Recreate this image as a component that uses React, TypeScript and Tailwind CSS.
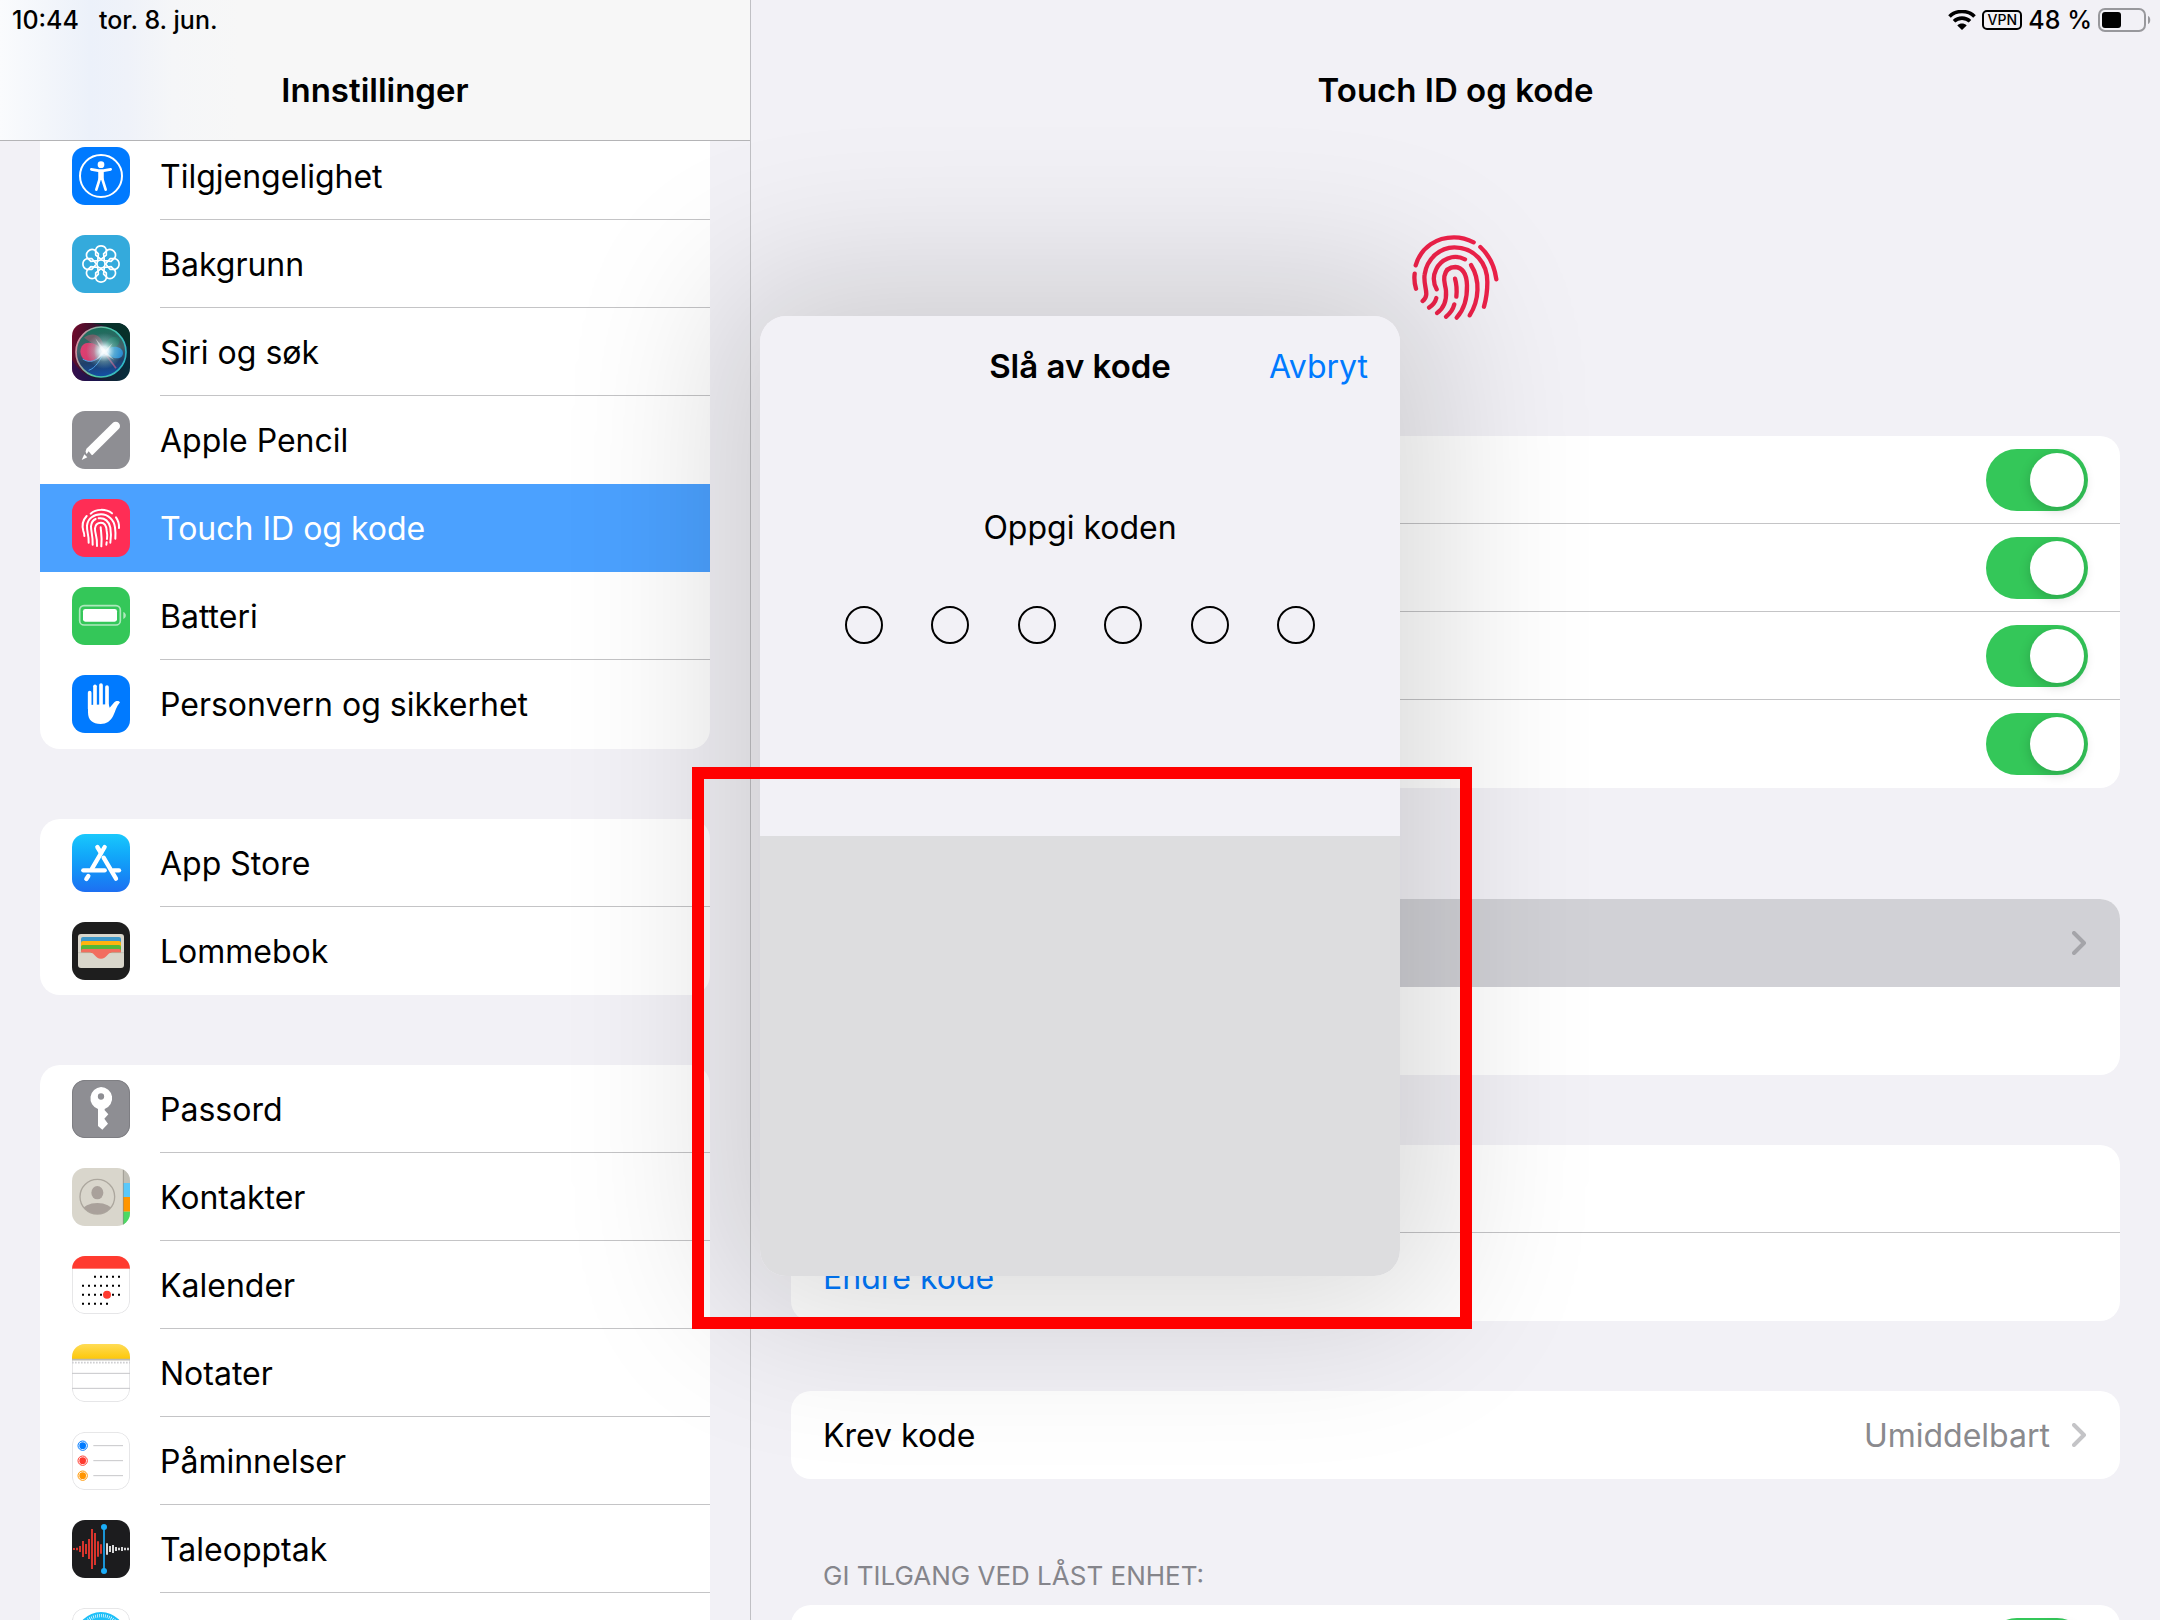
import { useId, type ReactNode } from 'react'
import clsx from 'clsx'

const IconTile = ({ className, children }: { className?: string; children: ReactNode }) => (
  <svg
    viewBox="0 0 174 174"
    className={clsx('size-[58px] shrink-0 rounded-[13px]', className)}
    fill="none"
    aria-hidden="true"
  >
    {children}
  </svg>
)

const TileBorder = () => (
  <rect x="1" y="1" width="172" height="172" rx="38" stroke="#e2e2e4" strokeWidth="3" />
)

const AccessibilityIcon = () => (
  <IconTile className="bg-[#007aff]">
    <circle cx="87" cy="87" r="63" stroke="#fff" strokeWidth="6" />
    <circle cx="87" cy="53" r="10" fill="#fff" />
    <path
      d="M58 67 L79 71 H95 L116 67 M84 72 V93 L73 128 M90 72 V93 L101 128"
      stroke="#fff"
      strokeWidth="8"
      strokeLinecap="round"
      strokeLinejoin="round"
    />
    <path d="M79 70 H95 V98 H79 Z" fill="#fff" />
  </IconTile>
)

const WallpaperIcon = () => (
  <IconTile className="bg-[#34aadc]">
    <g stroke="#fff" strokeWidth="5">
      <circle cx="87" cy="87" r="12" />
      {[0, 45, 90, 135, 180, 225, 270, 315].map((angle) => (
        <path
          key={angle}
          d="M87 73 L71 60 V44 A17 17 0 0 1 103 44 V60 Z"
          strokeLinejoin="round"
          transform={`rotate(${angle} 87 87)`}
        />
      ))}
    </g>
  </IconTile>
)

const SiriIcon = () => {
  const id = useId()
  return (
    <IconTile>
      <defs>
        <linearGradient id={`${id}bg`} x1="0" y1="0.3" x2="1" y2="0.5">
          <stop offset="0" stopColor="#6d0a2b" />
          <stop offset="0.5" stopColor="#1d1830" />
          <stop offset="1" stopColor="#082c3c" />
        </linearGradient>
        <linearGradient id={`${id}orb`} x1="0.4" y1="0" x2="0.5" y2="1">
          <stop offset="0" stopColor="#15705a" />
          <stop offset="0.45" stopColor="#45606a" />
          <stop offset="0.7" stopColor="#1f3f6a" />
          <stop offset="1" stopColor="#1250a8" />
        </linearGradient>
        <linearGradient id={`${id}ring`} x1="0" y1="0.3" x2="1" y2="0.6">
          <stop offset="0" stopColor="#dd8ba0" />
          <stop offset="0.5" stopColor="#4fc9a4" />
          <stop offset="1" stopColor="#2fb7c8" />
        </linearGradient>
        <linearGradient id={`${id}pink`} x1="0" y1="0" x2="1" y2="0">
          <stop offset="0" stopColor="#f03a72" />
          <stop offset="0.6" stopColor="#e0406f" />
          <stop offset="1" stopColor="#ffd0dc" stopOpacity="0.3" />
        </linearGradient>
        <radialGradient id={`${id}glow`}>
          <stop offset="0" stopColor="#fff" />
          <stop offset="0.25" stopColor="#eafaff" stopOpacity="0.9" />
          <stop offset="0.6" stopColor="#a5e0dc" stopOpacity="0.35" />
          <stop offset="1" stopColor="#8fe0e8" stopOpacity="0" />
        </radialGradient>
      </defs>
      <rect width="174" height="174" fill={`url(#${id}bg)`} />
      <path d="M0 174 V110 C30 160 70 172 120 174 Z" fill="#1c1160" opacity="0.6" />
      <path d="M60 0 H174 V80 C150 20 110 8 60 0 Z" fill="#07302a" />
      <circle cx="87" cy="87" r="75" fill={`url(#${id}orb)`} stroke={`url(#${id}ring)`} strokeWidth="5" />
      <path d="M36 44 C60 26 96 30 96 86 Z" fill="#b9566f" opacity="0.5" />
      <path d="M96 86 C96 50 122 34 138 44 C150 54 140 76 96 86 Z" fill="#1d8f70" opacity="0.5" />
      <path d="M25 86 C26 52 66 48 96 86 C82 120 30 130 25 86 Z" fill={`url(#${id}pink)`} fillOpacity="0.9" />
      <path d="M96 86 C118 64 150 68 153 90 C152 112 122 112 96 86 Z" fill="#2a9be8" fillOpacity="0.8" />
      <path d="M32 108 C60 126 80 106 96 86 C86 110 70 136 50 142" stroke="#4a9fe8" strokeWidth="3" />
      <path d="M98 90 L132 136" stroke="#e0608a" strokeWidth="5" opacity="0.6" />
      <circle cx="96" cy="84" r="54" fill={`url(#${id}glow)`} />
      <path d="M70 46 L100 82 L122 60 L104 88 L126 110 L96 92 L72 112 L90 86 Z" fill="#fff" opacity="0.5" />
    </IconTile>
  )
}

const PencilIcon = () => (
  <IconTile className="bg-[#8e8e93]">
    <path d="M54 121 L131 45" stroke="#fff" strokeWidth="26" strokeLinecap="round" />
    <path d="M36 140 L50 121 L62 136 Z" fill="#8e8e93" />
    <path d="M29 147 L37 130 L46 139 Z" fill="#fff" />
  </IconTile>
)

const TouchIdIcon = () => (
  <IconTile className="bg-[#ff2d55]">
    <g stroke="#fff" strokeWidth="6" strokeLinecap="round">
      <path d="M56 44 C72 29 102 29 120 43" />
      <path d="M44 51 C31 65 30 82 34 96 C36 101 37 106 37 111" />
      <path d="M132 55 C139 65 142 74 141 87" />
      <path d="M50 131 C51 106 44 102 45 80 C47 58 66 46 87 46 C108 46 126 62 129 85 C131 100 131 110 130 119" />
      <path d="M62 137 C63 110 57 100 57 82 C58 71 62 64 71 60" />
      <path d="M80 58 C98 55 112 68 115 86 C118 103 117 118 115 131" />
      <path d="M75 141 C77 112 68 104 69 88 C70 76 78 71 87 71 C97 71 103 80 104 95 C106 104 106 112 105 120" />
      <path d="M88 142 C91 115 87 100 86 85" />
      <path d="M104 130 L103 137" />
    </g>
  </IconTile>
)

const BatteryIcon = () => (
  <IconTile className="bg-[#34c759]">
    <rect x="23" y="56" width="122" height="58" rx="13" stroke="#fff" strokeOpacity="0.6" strokeWidth="5" />
    <rect x="33" y="66" width="102" height="38" rx="7" fill="#fff" />
    <path d="M154 75 C164 79 164 91 154 96 Z" fill="#fff" fillOpacity="0.6" />
  </IconTile>
)

const HandIcon = () => (
  <IconTile className="bg-[#007aff]">
    <g stroke="#fff" strokeWidth="11" strokeLinecap="round">
      <path d="M53 53 V100" />
      <path d="M69 34 V100" />
      <path d="M87 30 V100" />
      <path d="M105 36 V104" />
    </g>
    <path
      d="M48 90 V112 C48 136 62 147 86 147 C104 147 115 139 123 124 C130 110 133 94 144 82 C140 76 132 77 127 82 L113 98 L110 88 Z"
      fill="#fff"
    />
  </IconTile>
)

const AppStoreIcon = () => (
  <IconTile className="bg-linear-to-b from-[#1ac8fc] to-[#1d6ff2]">
    <g stroke="#fff" strokeWidth="13" strokeLinecap="round">
      <path d="M98 39 L60 104" />
      <path d="M76 39 L87 57" />
      <path d="M95 71 L132 134" />
      <path d="M34 109 H98" />
      <path d="M124 109 H141" />
      <path d="M49 126 L43 135" />
    </g>
  </IconTile>
)

const WalletIcon = () => (
  <IconTile className="bg-[#1e1e1e]">
    <rect x="18" y="36" width="138" height="102" rx="9" fill="#d9d6cb" />
    <rect x="27" y="45" width="120" height="30" rx="6" fill="#3f98c9" />
    <rect x="27" y="57" width="120" height="30" rx="6" fill="#ffb30f" />
    <rect x="27" y="69" width="120" height="23" rx="6" fill="#53b83a" />
    <path
      d="M27 92 V87 Q27 81 33 81 H141 Q147 81 147 87 V92 H118 C105 92 105 110 87 110 C69 110 69 92 56 92 Z"
      fill="#f26d5f"
    />
    <path d="M18 92 H56 M118 92 H156" stroke="#b9b6ac" strokeWidth="2" />
  </IconTile>
)

const KeyIcon = () => (
  <IconTile className="bg-[#8e8e93]">
    <rect x="1" y="1" width="172" height="172" rx="38" stroke="#7c7c80" strokeWidth="3" />
    <path
      fillRule="evenodd"
      d="M87 21 A34 34 0 0 1 98 87 L98 91 L109 103 L97 116 L108 131 L91 149 L78 138 V87 A34 34 0 0 1 87 21 Z M87 40 A9 9 0 1 0 87 59 A9 9 0 1 0 87 40 Z"
      fill="#fff"
    />
  </IconTile>
)

const ContactsIcon = () => {
  const id = useId()
  return (
    <IconTile className="bg-[#d9d6cc]">
      <rect x="153" width="21" height="45" fill="#c0beb5" />
      <rect x="153" y="45" width="21" height="42" fill="#5ac8fa" />
      <rect x="153" y="87" width="21" height="44" fill="#ff9500" />
      <rect x="153" y="131" width="21" height="43" fill="#4cd964" />
      <path d="M154 0 V174" stroke="#8d8a80" strokeWidth="2" />
      <clipPath id={id}>
        <circle cx="76" cy="86" r="52" />
      </clipPath>
      <circle cx="76" cy="86" r="52" stroke="#aca79e" strokeWidth="4" />
      <ellipse cx="76" cy="74" rx="18" ry="20" fill="#a9a19b" />
      <ellipse cx="76" cy="128" rx="44" ry="23" fill="#a9a19b" clipPath={`url(#${id})`} />
    </IconTile>
  )
}

const calendarRows = [
  { y: 62, from: 2, to: 6 },
  { y: 89, from: 0, to: 6 },
  { y: 116, from: 0, to: 6 },
  { y: 143, from: 0, to: 4 },
]

const CalendarIcon = () => (
  <IconTile className="bg-white">
    <TileBorder />
    <rect width="174" height="38" fill="#ff3b30" />
    {calendarRows.map(({ y, from, to }) => (
      <path
        key={y}
        d={`M${30 + from * 18} ${y} H${36 + to * 18}`}
        stroke="#000"
        strokeWidth="6"
        strokeDasharray="6 12"
      />
    ))}
    <circle cx="105" cy="116" r="12" fill="#ff3b30" />
  </IconTile>
)

const NotesIcon = () => {
  const id = useId()
  return (
    <IconTile className="bg-white">
      <defs>
        <linearGradient id={id} x1="0" y1="0" x2="0" y2="1">
          <stop offset="0" stopColor="#ffdc55" />
          <stop offset="1" stopColor="#fdc70a" />
        </linearGradient>
      </defs>
      <TileBorder />
      <rect width="174" height="45" fill={`url(#${id})`} />
      <path d="M0 47 H174" stroke="#bcb9b0" strokeWidth="5" />
      <path d="M0 56 H174" stroke="#cfcfd2" strokeWidth="5" strokeDasharray="5 4" />
      <path d="M0 88 H174 M0 133 H174" stroke="#c6c6c9" strokeWidth="3" />
    </IconTile>
  )
}

const RemindersIcon = () => (
  <IconTile className="bg-white">
    <TileBorder />
    {[
      { y: 41, color: '#007aff' },
      { y: 86, color: '#ff3b30' },
      { y: 131, color: '#ff9500' },
    ].map(({ y, color }) => (
      <g key={y}>
        <circle cx="32" cy={y} r="14" stroke={color} strokeWidth="3" />
        <circle cx="32" cy={y} r="10" fill={color} />
        <path d={`M64 ${y} H153`} stroke="#c6c6c9" strokeWidth="3" />
      </g>
    ))}
  </IconTile>
)

const redBars = [3, 4, 9, 24, 15, 30, 60, 48, 23, 14]
const whiteBars = [17, 9, 12, 6, 4, 6, 4, 4]

const VoiceMemosIcon = () => (
  <IconTile className="bg-[#1c1c1e]">
    {redBars.map((h, i) => (
      <path key={i} d={`M${6 + i * 9} ${87 - h} V${87 + h}`} stroke="#ff3b30" strokeWidth="5" />
    ))}
    {whiteBars.map((h, i) => (
      <path key={i} d={`M${105 + i * 9} ${87 - h} V${87 + h}`} stroke="#fff" strokeWidth="5" />
    ))}
    <path d="M96 21 V153" stroke="#1badf8" strokeWidth="5" />
    <circle cx="96" cy="21" r="9" fill="#1badf8" />
    <circle cx="96" cy="153" r="9" fill="#1badf8" />
  </IconTile>
)

const SafariIcon = () => (
  <IconTile className="bg-white">
    <TileBorder />
    <circle cx="87" cy="87" r="75" fill="#1fc0f8" />
    <circle cx="87" cy="87" r="64" stroke="#fff" strokeWidth="10" strokeDasharray="2 4" />
  </IconTile>
)

const Fingerprint = () => (
  <svg viewBox="96 104 261 258" className="mx-auto h-[86px] w-[87px]" fill="none" aria-hidden="true">
    <g stroke="#ec2149" strokeWidth="13" strokeLinecap="round">
      <path d="M107 195 C124 138 172 111 222 111 C244 111 264 117 281 126" />
      <path d="M301 140 C328 165 344 200 349 237" />
      <path d="M104 220 C102 236 104 252 108 265" />
      <path d="M128 302 C152 284 128 256 134 222 C141 175 180 141 223 141 C285 141 322 190 322 245 C322 275 318 298 312 319" />
      <path d="M170 267 C159 246 159 226 168 208 C181 178 220 159 255 177" />
      <path d="M169 293 C166 305 158 315 147 322" />
      <path d="M171 338 C191 324 200 300 198 272 C197 255 190 246 193 228 C197 206 212 200 226 200 C250 202 260 226 261 255 C262 295 250 330 230 352" />
      <path d="M223 312 C219 328 210 340 198 349" />
      <path d="M225 235 C230 252 231 270 229 289" />
      <path d="M273 194 C301 238 298 300 269 345" />
    </g>
  </svg>
)

const Chevron = ({ className }: { className?: string }) => (
  <svg viewBox="0 0 16 24" className={clsx('h-6 w-4', className)} fill="none" aria-hidden="true">
    <path d="M2 2 L12 12 L2 22" stroke="currentColor" strokeWidth="4" strokeLinecap="round" strokeLinejoin="round" />
  </svg>
)

type Item = { label: string; icon: ReactNode; active?: boolean; divider?: boolean; iconOnly?: boolean }

const sections: Item[][] = [
  [
    { label: 'Tilgjengelighet', icon: <AccessibilityIcon />, divider: true },
    { label: 'Bakgrunn', icon: <WallpaperIcon />, divider: true },
    { label: 'Siri og søk', icon: <SiriIcon />, divider: true },
    { label: 'Apple Pencil', icon: <PencilIcon /> },
    { label: 'Touch ID og kode', icon: <TouchIdIcon />, active: true },
    { label: 'Batteri', icon: <BatteryIcon />, divider: true },
    { label: 'Personvern og sikkerhet', icon: <HandIcon /> },
  ],
  [
    { label: 'App Store', icon: <AppStoreIcon />, divider: true },
    { label: 'Lommebok', icon: <WalletIcon /> },
  ],
  [
    { label: 'Passord', icon: <KeyIcon />, divider: true },
    { label: 'Kontakter', icon: <ContactsIcon />, divider: true },
    { label: 'Kalender', icon: <CalendarIcon />, divider: true },
    { label: 'Notater', icon: <NotesIcon />, divider: true },
    { label: 'Påminnelser', icon: <RemindersIcon />, divider: true },
    { label: 'Taleopptak', icon: <VoiceMemosIcon />, divider: true },
    { label: 'Safari', icon: <SafariIcon />, iconOnly: true },
  ],
]

const SidebarItem = ({ label, icon, active, divider, iconOnly }: Item) => (
  <li>
    <a
      href="#"
      aria-label={label}
      className={clsx('flex h-[88px] items-center gap-[30px] pl-8', active && 'bg-[#4ba1ff] text-white')}
    >
      {icon}
      {!iconOnly && (
        <span className={clsx('flex flex-1 items-center self-stretch pt-0.5', divider && 'border-b border-[#c4c4c6]')}>
          {label}
        </span>
      )}
    </a>
  </li>
)

const Sidebar = () => (
  <aside className="relative w-[751px] shrink-0 overflow-hidden border-r border-[#c0c0c4]">
    <header className="absolute inset-x-0 top-0 flex h-[141px] items-end justify-center border-b border-[#b4b4b6] bg-[linear-gradient(to_right,#fafbfd_0%,#f3f6fb_6%,#ecf1fa_12%,#eff2f9_17%,#f5f6f8_23%,#f7f7f7_32%)] pb-[29px]">
      <h1 className="text-[33px] font-semibold">Innstillinger</h1>
    </header>
    <nav className="flex flex-col gap-[70px] px-10 pt-[132px]">
      {sections.map((items) => (
        <ul
          key={items[0].label}
          className="overflow-hidden rounded-[20px] bg-white first:rounded-t-none first:pb-px"
        >
          {items.map((item) => (
            <SidebarItem key={item.label} {...item} />
          ))}
        </ul>
      ))}
    </nav>
  </aside>
)

const Toggle = ({ label }: { label: string }) => (
  <input
    type="checkbox"
    role="switch"
    defaultChecked
    aria-label={label}
    className="flex h-[62px] w-[102px] appearance-none items-center justify-end rounded-full bg-[#34c759] px-1 before:size-[54px] before:rounded-full before:bg-white before:shadow-[0_3px_12px_rgba(0,0,0,0.18)]"
  />
)

const Card = ({ children, className }: { children: ReactNode; className?: string }) => (
  <div className={clsx('overflow-hidden rounded-[20px] bg-white', className)}>{children}</div>
)

const rowClass = 'flex h-[88px] w-full items-center px-8'

const unlockOptions = ['Opplåsing av iPad', 'iTunes og App Store', 'Lommebok', 'Autoutfyll passord']

const Content = () => (
  <main className="min-w-0 flex-1 overflow-hidden px-10">
    <h2 className="flex h-[140px] items-end justify-center pb-[29px] text-[33px] font-semibold">Touch ID og kode</h2>
    <div className="pt-[95px] pb-[115px]">
      <Fingerprint />
    </div>
    <Card>
      {unlockOptions.map((label) => (
        <div key={label} className={clsx(rowClass, 'justify-end border-b border-[#c4c4c6] last:border-none')}>
          <Toggle label={label} />
        </div>
      ))}
    </Card>
    <Card className="mt-[111px]">
      <button aria-label="Fingeravtrykk" className={clsx(rowClass, 'justify-end bg-[#d1d1d6]')}>
        <Chevron className="text-[#a4a4a9]" />
      </button>
      <button aria-label="Legg til et fingeravtrykk" className={rowClass} />
    </Card>
    <Card className="mt-[70px]">
      <button aria-label="Slå av kode" className={clsx(rowClass, 'border-b border-[#c4c4c6]')} />
      <button className={clsx(rowClass, 'pt-0.5 text-[#007aff]')}>Endre kode</button>
    </Card>
    <Card className="mt-[70px]">
      <button className={clsx(rowClass, 'gap-[22px]')}>
        <span className="flex-1 pt-0.5 text-left">Krev kode</span>
        <span className="pt-0.5 text-[#8a8a8e]">Umiddelbart</span>
        <Chevron className="text-[#c4c4c7]" />
      </button>
    </Card>
    <h3 className="flex h-[126px] items-end px-8 pb-[11px] text-[26px] leading-9 text-[#85858b]">
      GI TILGANG VED LÅST ENHET:
    </h3>
    <Card>
      <div className={clsx(rowClass, 'justify-end')}>
        <Toggle label="Tilgang ved låst enhet" />
      </div>
    </Card>
  </main>
)

const StatusBar = () => (
  <div className="absolute inset-x-0 top-0 flex h-10 items-center justify-between pr-2 pl-3 text-[25px] font-medium">
    <div className="flex gap-5">
      <span>10:44</span>
      <span>tor. 8. jun.</span>
    </div>
    <div className="flex items-center gap-1.5">
      <svg viewBox="0 0 28 20" className="h-5 w-7" fill="none" aria-hidden="true">
        <path d="M1.5 6.5 C8 -0.2 20 -0.2 26.5 6.5" stroke="#000" strokeWidth="3.6" />
        <path d="M6 11.3 C10.5 7 17.5 7 22 11.3" stroke="#000" strokeWidth="3.6" />
        <path d="M14 20 L9.3 15.4 C12 13 16 13 18.7 15.4 Z" fill="#000" />
      </svg>
      <span className="flex h-5 w-10 items-center justify-center rounded-[5px] border-2 border-black text-[14px]">
        VPN
      </span>
      <span>48 %</span>
      <svg viewBox="0 0 54 24" className="h-6 w-[54px]" fill="none" aria-hidden="true">
        <rect x="1" y="1" width="46" height="22" rx="6" stroke="#98989c" strokeWidth="2" />
        <rect x="4" y="4" width="19" height="16" rx="3" fill="#000" />
        <path d="M50 8 C53 9 53 15 50 16 Z" fill="#98989c" />
      </svg>
    </div>
  </div>
)

const PasscodeDialog = () => (
  <div
    role="dialog"
    aria-label="Slå av kode"
    className="absolute top-[316px] left-1/2 flex h-[960px] w-[640px] -translate-x-1/2 flex-col rounded-[26px] shadow-[0_0_160px_40px_rgba(0,0,0,0.15)]"
  >
    <div className="h-[520px] rounded-t-[26px] bg-[#f2f1f6]">
      <div className="grid h-[100px] grid-cols-[1fr_auto_1fr] items-center px-8">
        <h2 className="col-start-2 text-[33px] font-semibold">Slå av kode</h2>
        <button className="justify-self-end pt-0.5 text-[#007aff]">Avbryt</button>
      </div>
      <p className="mt-[87px] text-center leading-[50px]">Oppgi koden</p>
      <div className="mx-auto mt-[53px] flex w-[470px] justify-between">
        {[1, 2, 3, 4, 5, 6].map((digit) => (
          <span key={digit} className="size-[38px] rounded-full border-2 border-black" />
        ))}
      </div>
    </div>
    <div className="flex-1 rounded-b-[26px] bg-[#dddddf]" />
    <div className="pointer-events-none absolute top-[451px] -right-[72px] -left-[68px] h-[562px] border-12 border-[#ff0000]" />
  </div>
)

const App = () => (
  <div className="relative flex h-screen overflow-hidden bg-[#f2f1f6] font-[Inter,'Liberation_Sans',sans-serif] text-[32px] leading-[42px] text-black">
    <Sidebar />
    <Content />
    <StatusBar />
    <PasscodeDialog />
  </div>
)

export default App
